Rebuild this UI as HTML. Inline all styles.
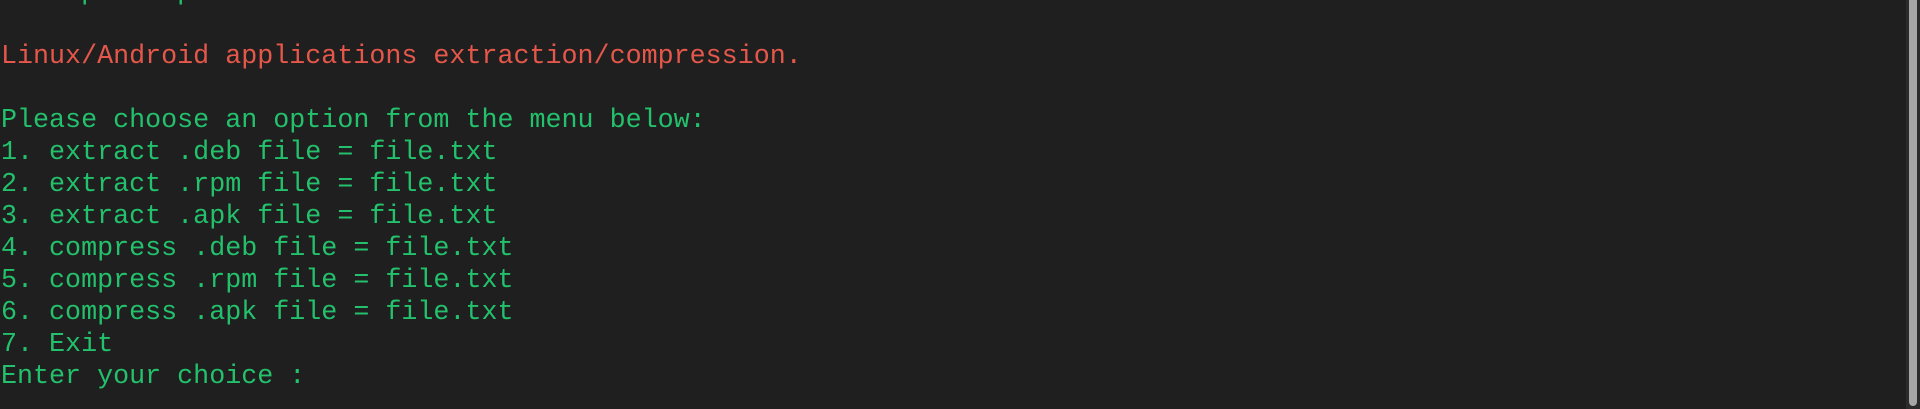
<!DOCTYPE html>
<html><head><meta charset="utf-8"><style>
html,body{margin:0;padding:0;}
body{width:1920px;height:409px;background:#1f1f1f;overflow:hidden;position:relative;}
pre{position:absolute;left:1px;top:-23.5px;margin:0;font-family:"Liberation Mono",monospace;font-size:26.7px;line-height:32px;color:#23c16b;white-space:pre;}
.r{color:#e5574a;}
.track{position:absolute;left:1906px;top:0;width:14px;height:409px;background:#2b2b2b;}
.thumb{position:absolute;left:1909px;top:0;width:8px;height:406px;background:#a6a6a6;border-radius:0 0 4px 4px;}
</style></head><body>
<pre>     p     p

<span class="r">Linux/Android applications extraction/compression.</span>

Please choose an option from the menu below:
1. extract .deb file = file.txt
2. extract .rpm file = file.txt
3. extract .apk file = file.txt
4. compress .deb file = file.txt
5. compress .rpm file = file.txt
6. compress .apk file = file.txt
7. Exit
Enter your choice :</pre>
<div class="track"></div><div class="thumb"></div>
</body></html>
